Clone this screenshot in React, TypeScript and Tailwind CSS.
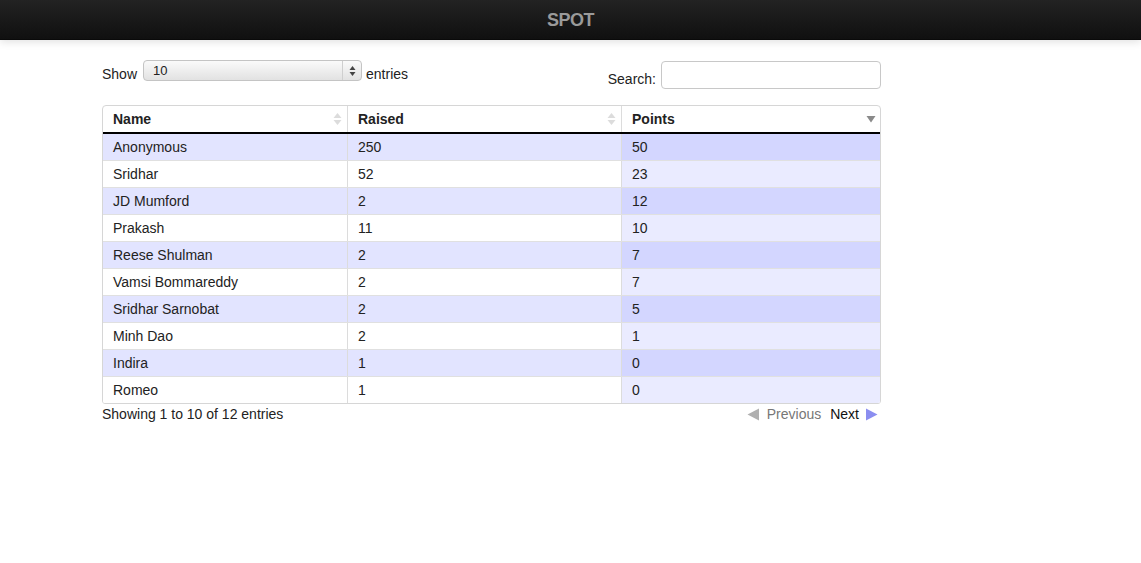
import * as React from 'react';

const rows = [
  ['Anonymous', '250', '50'],
  ['Sridhar', '52', '23'],
  ['JD Mumford', '2', '12'],
  ['Prakash', '11', '10'],
  ['Reese Shulman', '2', '7'],
  ['Vamsi Bommareddy', '2', '7'],
  ['Sridhar Sarnobat', '2', '5'],
  ['Minh Dao', '2', '1'],
  ['Indira', '1', '0'],
  ['Romeo', '1', '0'],
];

function SortBoth() {
  return (
    <svg width="9" height="14" viewBox="0 0 9 14" className="shrink-0">
      <path d="M4.5 1 L8.5 6 H0.5 Z" fill="#dcdcdc" />
      <path d="M4.5 13 L8.5 8 H0.5 Z" fill="#dcdcdc" />
    </svg>
  );
}

function SortDesc() {
  return (
    <svg width="10" height="8" viewBox="0 0 10 8" className="shrink-0">
      <path d="M0.5 1 H9.5 L5 7.5 Z" fill="#8a8a8a" />
    </svg>
  );
}

export default function App() {
  return (
    <div className="min-h-[563px] bg-white font-['Liberation_Sans',Arial,sans-serif] text-[14px] leading-5 text-[#222]">
      <header className="h-10 flex items-center justify-center bg-gradient-to-b from-[#232323] to-[#101010] border-b border-[#0a0a0a] shadow-[0_2px_8px_rgba(0,0,0,0.12)]">
        <span className="text-[18px] font-bold text-[#9a9a9a] tracking-[-0.5px]">SPOT</span>
      </header>

      <div className="ml-[102px] w-[779px]">
        <div className="mt-[19px] flex items-start justify-between">
          <div className="flex items-start mt-[1px]">
            <span className="mt-[4px] mr-[6px]">Show</span>
            <div className="flex items-center h-[21px] w-[219px] rounded-[4px] border border-[#c4c4c4] bg-gradient-to-b from-[#fafafa] to-[#e2e2e2]">
              <span className="flex-1 pl-[9px] text-[13px] leading-none text-[#222]">10</span>
              <div className="h-full w-[19px] border-l border-[#cfcfcf] flex items-center justify-center">
                <svg width="7" height="12" viewBox="0 0 7 12">
                  <path d="M3.5 1 L6.5 5 H0.5 Z" fill="#444" />
                  <path d="M3.5 11 L6.5 7 H0.5 Z" fill="#444" />
                </svg>
              </div>
            </div>
            <span className="mt-[4px] ml-[4px]">entries</span>
          </div>
          <div className="flex items-start gap-[5px] mt-[2px]">
            <span className="mt-[8px]">Search:</span>
            <div className="h-[28px] w-[220px] rounded-[4px] border border-[#c8c8c8] bg-white" />
          </div>
        </div>

        <div className="mt-[16px] border border-[#d6d6d6] rounded-t-[4px] rounded-b-[3px] overflow-hidden">
          <div className="flex h-[28px] border-b-2 border-black font-bold">
            <div className="w-[245px] flex items-center justify-between pl-[10px] pr-[5px] border-r border-[#dcdcdc]">
              <span>Name</span>
              <SortBoth />
            </div>
            <div className="w-[274px] flex items-center justify-between pl-[10px] pr-[5px] border-r border-[#dcdcdc]">
              <span>Raised</span>
              <SortBoth />
            </div>
            <div className="flex-1 flex items-center justify-between pl-[10px] pr-[4px]">
              <span>Points</span>
              <SortDesc />
            </div>
          </div>
          {rows.map((r, i) => {
            const odd = i % 2 === 0;
            return (
              <div
                key={i}
                className={`flex ${i < rows.length - 1 ? 'h-[27px] border-b border-[#e0e0e0]' : 'h-[26px]'} ${odd ? 'bg-[#e2e4ff]' : 'bg-white'}`}
              >
                <div className="w-[245px] flex items-center pl-[10px] border-r border-[#dcdcdc]">{r[0]}</div>
                <div className="w-[274px] flex items-center pl-[10px] border-r border-[#dcdcdc]">{r[1]}</div>
                <div className={`flex-1 flex items-center pl-[10px] ${odd ? 'bg-[#d3d6ff]' : 'bg-[#eaebff]'}`}>{r[2]}</div>
              </div>
            );
          })}
        </div>

        <div className="flex items-center justify-between">
          <span>Showing 1 to 10 of 12 entries</span>
          <div className="flex items-center pr-[3px]">
            <svg width="13" height="13" viewBox="0 0 13 13" className="mr-[7px]">
              <path d="M12 0.5 V12.5 L0.5 6.5 Z" fill="#b0b0b0" />
            </svg>
            <span className="text-[#777]">Previous</span>
            <span className="ml-[9px] text-[#111]">Next</span>
            <svg width="13" height="13" viewBox="0 0 13 13" className="ml-[6px]">
              <path d="M1 0.5 V12.5 L12.5 6.5 Z" fill="#8b8ef0" />
            </svg>
          </div>
        </div>
      </div>
    </div>
  );
}
